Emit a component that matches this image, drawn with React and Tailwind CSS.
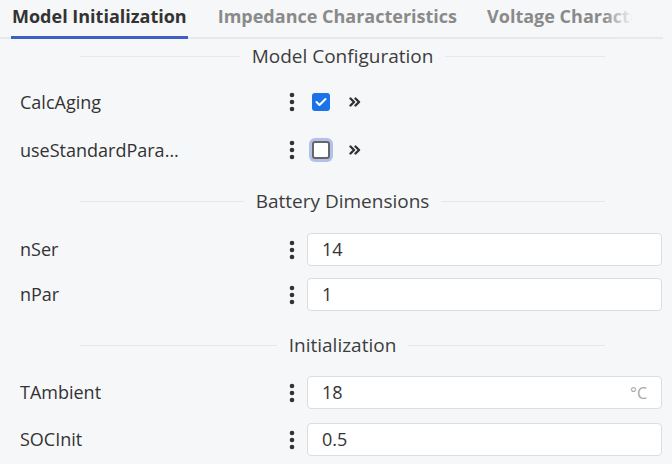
import React from 'react'

const Kebab = () => (
  <div className="w-[24px] flex justify-center">
    <svg width="6" height="20" viewBox="0 0 6 20">
      <circle cx="3" cy="3" r="2.3" fill="#333" />
      <circle cx="3" cy="10" r="2.3" fill="#333" />
      <circle cx="3" cy="17" r="2.3" fill="#333" />
    </svg>
  </div>
)

const Chevrons = () => (
  <svg width="12" height="10" viewBox="0 0 12 10" className="ml-[19px]">
    <path d="M1.5 1.5 L5 5 L1.5 8.5 M6.5 1.5 L10 5 L6.5 8.5" fill="none" stroke="#333" strokeWidth="2.4" strokeLinecap="round" strokeLinejoin="round" />
  </svg>
)

const Section = ({ title }) => (
  <div className="ml-[80px] w-[525px] flex items-center gap-3 h-[26px]">
    <div className="flex-1 h-px bg-[#e6e7ea]"></div>
    <span className="text-[19px] text-[#3d3d3d]">{title}</span>
    <div className="flex-1 h-px bg-[#e6e7ea]"></div>
  </div>
)

const Label = ({ children }) => (
  <div className="w-[280px] pl-[20px]">
    <div className="max-w-[170px] text-[18px] text-[#333] truncate">{children}</div>
  </div>
)

const CheckRow = ({ label, checked }) => (
  <div className="flex items-center h-[30px]">
    <Label>{label}</Label>
    <Kebab />
    <div className="ml-[8px] flex items-center">
      {checked ? (
        <div className="w-[18px] h-[18px] rounded-[3px] bg-[#1a73e8] flex items-center justify-center">
          <svg width="12" height="10" viewBox="0 0 12 10">
            <path d="M1.5 5 L4.5 8 L10.5 2" fill="none" stroke="#fff" strokeWidth="2" strokeLinecap="round" strokeLinejoin="round" />
          </svg>
        </div>
      ) : (
        <div className="w-[18px] h-[18px] rounded-[3px] bg-white border-2 border-[#666] ring-[3px] ring-[#b4c0ec]"></div>
      )}
      <Chevrons />
    </div>
  </div>
)

const InputRow = ({ label, value, unit }) => (
  <div className="flex items-center h-[33px]">
    <Label>{label}</Label>
    <Kebab />
    <div className="ml-[3px] w-[355px] h-[33px] bg-white border border-[#dcdde0] rounded-[4px] flex items-center px-[14px]">
      <span className="flex-1 text-[18px] text-[#333]">{value}</span>
      {unit && <span className="text-[16px] text-[#a8a8a8]">{unit}</span>}
    </div>
  </div>
)

export default function App() {
  return (
    <div className="w-[672px] h-[464px] bg-[#f6f7f9] overflow-hidden" style={{ fontFamily: '"Open Sans", sans-serif' }}>
      {/* Tabs */}
      <div className="relative w-[663px] h-[39px] overflow-hidden">
        <div className="absolute left-0 right-0 bottom-0 h-[2px] bg-[#e8e9ec]"></div>
        <div className="relative h-full flex items-end gap-[30px] pl-[11px] text-[18px] font-bold whitespace-nowrap">
          <div className="pb-[6px] px-[1px] border-b-[3px] border-[#3f5fc4] text-[#333]">Model Initialization</div>
          <div className="pb-[9px] text-[#8a8a8a]">Impedance Characteristics</div>
          <div className="pb-[9px] text-[#8a8a8a]">Voltage Characteristics</div>
        </div>
        <div className="absolute right-0 top-0 bottom-[2px] w-[60px] bg-gradient-to-r from-transparent to-[#f6f7f9] to-50%"></div>
      </div>

      <div className="pt-[4px]">
        <Section title="Model Configuration" />
        <div className="mt-[18px] flex flex-col gap-[18px]">
          <CheckRow label="CalcAging" checked />
          <CheckRow label="useStandardParameters" />
        </div>

        <div className="mt-[23px]">
          <Section title="Battery Dimensions" />
        </div>
        <div className="mt-[19px] flex flex-col gap-[12px]">
          <InputRow label="nSer" value="14" />
          <InputRow label="nPar" value="1" />
        </div>

        <div className="mt-[21px]">
          <Section title="Initialization" />
        </div>
        <div className="mt-[18px] flex flex-col gap-[14px]">
          <InputRow label="TAmbient" value="18" unit="°C" />
          <InputRow label="SOCInit" value="0.5" />
        </div>
      </div>
    </div>
  )
}
